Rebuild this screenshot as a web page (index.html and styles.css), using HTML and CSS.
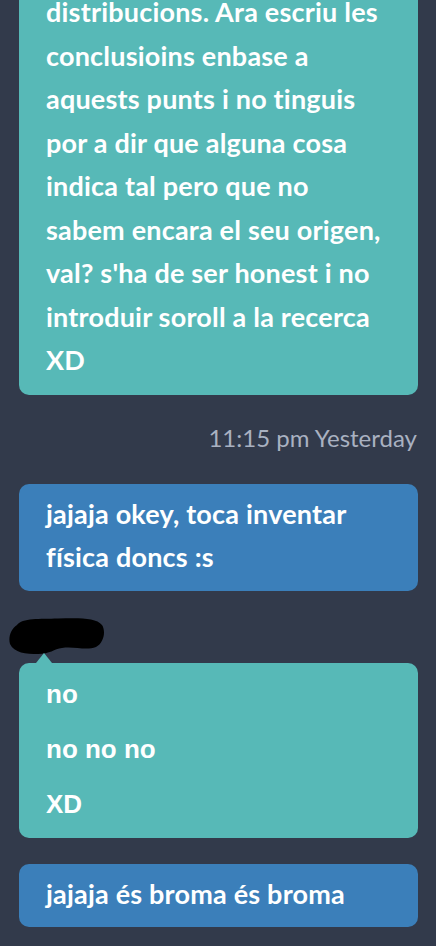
FILE: index.html
```html
<!DOCTYPE html>
<html lang="ca">
<head>
  <meta charset="UTF-8">
  <title>Xat</title>
  <meta name="viewport" content="width=device-width, initial-scale=1.0">
  <link rel="stylesheet" href="styles.css">
</head>
<body>

<div class="chat">
  <div class="bubble teal first">
    <p>distribucions. Ara escriu les<br>conclusioins enbase a<br>aquests punts i no tinguis<br>por a dir que alguna cosa<br>indica tal pero que no<br>sabem encara el seu origen,<br>val? s'ha de ser honest i no<br>introduir soroll a la recerca<br>XD</p>
  </div>

  <div class="stamp">11:15 pm Yesterday</div>

  <div class="bubble blue">
    <p>jajaja okey, toca inventar<br>física doncs :s</p>
  </div>

  <div class="sender">
    <!-- nom tapat -->
    <svg width="97" height="38" viewBox="0 0 97 38">
      <path d="M9 8 C14 1 32 2 50 1.5 C68 1 88 0 94 8 C98 14 96 26 88 30 C78 34 66 29 54 31 C46 32 42 37 30 37 C18 37 6 36 2 27 C0 20 3 12 9 8 Z" fill="#000"/>
    </svg>
  </div>

  <div class="bubble teal plain">
    <p>no</p>
    <p>no no no</p>
    <p>XD</p>
  </div>

  <div class="bubble blue">
    <p>jajaja és broma és broma</p>
  </div>
</div>

</body>
</html>
```

FILE: styles.css
```css
body {
  margin: 0;
  background: #323a4b;
  font-family: Lato, "Noto Sans", sans-serif;
  color: #fff;
  overflow: hidden;
}

.chat {
  padding: 0 18px 0 19px;
}

.bubble {
  border-radius: 10px;
  padding: 8px 6px 13px 27px;
  font-size: 27px;
  font-weight: 700;
  line-height: 43.5px;
  letter-spacing: 0.2px;
  white-space: nowrap;
}

.bubble p {
  margin: 0;
}

.teal {
  background: #57b9b7;
}

.blue {
  background: #3b7fba;
  margin-bottom: 26px;
  padding-bottom: 12px;
}

.first {
  margin-top: -18px;
  border-radius: 0 0 10px 10px;
}

.stamp {
  margin: 28px 1px 31px 0;
  text-align: right;
  font-size: 24px;
  line-height: 30px;
  color: #a9b1c1;
}

.sender {
  margin-left: -11px;
  height: 38px;
}

.sender svg {
  display: block;
}

.plain {
  position: relative;
  margin-top: 8px;
  margin-bottom: 26px;
  padding: 16px 27px 19px;
  font-family: "Liberation Sans", Arial, sans-serif;
  font-size: 26px;
  line-height: 30px;
  letter-spacing: 0;
}

.plain::before {
  content: "";
  position: absolute;
  top: -10px;
  left: 17px;
  border-left: 8px solid transparent;
  border-right: 8px solid transparent;
  border-bottom: 10px solid #57b9b7;
}

.plain p + p {
  margin-top: 25px;
}
```
